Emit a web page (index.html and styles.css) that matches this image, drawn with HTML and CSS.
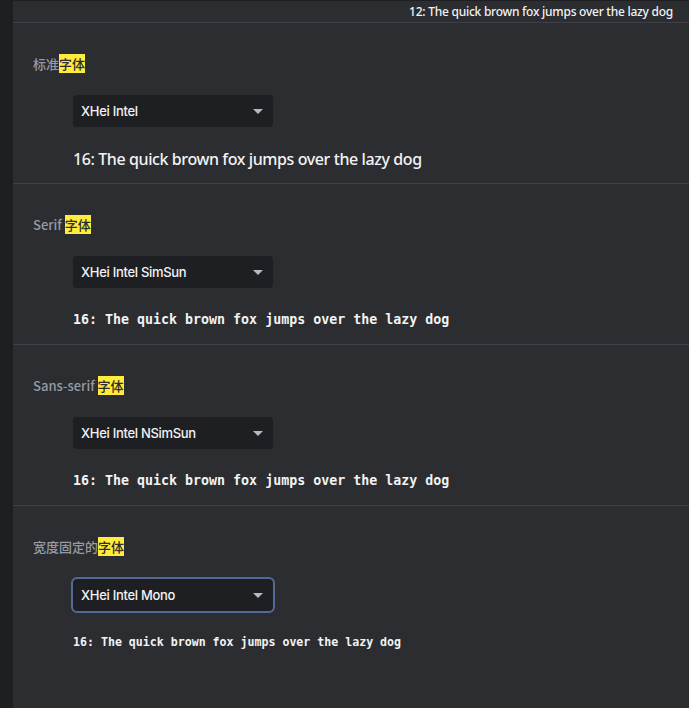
FILE: index.html
```html
<!DOCTYPE html>
<html lang="zh">
<head>
<meta charset="utf-8">
<link rel="stylesheet" href="styles.css">
</head>
<body>
<div class="sidebar"></div>
<div class="main">
  <div class="topbar">12: The quick brown fox jumps over the lazy dog</div>
  <section class="group">
    <div class="label">标准<mark>字体</mark></div>
    <div class="select"><span>XHei Intel</span><i class="arrow"></i></div>
    <div class="sample sample-sans">16: The quick brown fox jumps over the lazy dog</div>
  </section>
  <section class="group">
    <div class="label">Serif <mark>字体</mark></div>
    <div class="select"><span>XHei Intel SimSun</span><i class="arrow"></i></div>
    <div class="sample sample-mono">16: The quick brown fox jumps over the lazy dog</div>
  </section>
  <section class="group">
    <div class="label">Sans-serif <mark>字体</mark></div>
    <div class="select"><span>XHei Intel NSimSun</span><i class="arrow"></i></div>
    <div class="sample sample-mono">16: The quick brown fox jumps over the lazy dog</div>
  </section>
  <section class="group last">
    <div class="label">宽度固定的<mark>字体</mark></div>
    <div class="select focused"><span>XHei Intel Mono</span><i class="arrow"></i></div>
    <div class="sample sample-small">16: The quick brown fox jumps over the lazy dog</div>
  </section>
</div>
</body>
</html>
```
FILE: styles.css
```css
html, body {
  margin: 0;
  height: 100%;
  background: #2b2d31;
  overflow: hidden;
}
body {
  display: flex;
  font-family: "Noto Sans", "Noto Sans CJK SC", sans-serif;
  color: #f2f3f5;
}
.sidebar {
  width: 13px;
  flex: none;
  background: #1e1f22;
}
.main {
  flex: 1;
  border-top: 1px solid #1e1f22;
}
.topbar {
  height: 21px;
  line-height: 21px;
  border-bottom: 1px solid #3f4147;
  text-align: right;
  padding-right: 16px;
  font-size: 12px;
  font-weight: 500;
  color: #f2f3f5;
  letter-spacing: -0.25px;
}
.group {
  padding: 33px 0 14px 20px;
  border-bottom: 1px solid #3f4147;
}
.group.last {
  border-bottom: none;
}
.label {
  font-family: "Noto Sans CJK SC", sans-serif;
  font-size: 13px;
  line-height: 16px;
  font-weight: 500;
  color: #949ba4;
}
.label mark {
  background: #ffeb3b;
  color: #2b2d31;
  padding: 0;
}
.select {
  margin: 23px 0 0 40px;
  width: 200px;
  height: 32px;
  box-sizing: border-box;
  background: #1e1f22;
  border-radius: 4px;
  display: flex;
  align-items: center;
  justify-content: space-between;
  padding: 0 10px 0 8px;
  font-family: "Inter", sans-serif;
  font-size: 13px;
  font-weight: 500;
  color: #f2f3f5;
  letter-spacing: -0.3px;
}
.select.focused {
  outline: 2px solid #536a96;
  margin-top: 24px;
}
.arrow {
  width: 0;
  height: 0;
  border-left: 5px solid transparent;
  border-right: 5px solid transparent;
  border-top: 5px solid #b5bac1;
}
.sample {
  margin-left: 40px;
  color: #f2f3f5;
  white-space: nowrap;
}
.sample-sans {
  margin-top: 22px;
  font-family: "Noto Sans", sans-serif;
  font-size: 16px;
  font-weight: 500;
  line-height: 20px;
  letter-spacing: -0.4px;
}
.sample-mono {
  margin-top: 22px;
  font-family: "DejaVu Sans Mono", monospace;
  font-size: 13.3px;
  font-weight: bold;
  line-height: 20px;
}
.sample-small {
  margin-top: 23px;
  font-family: "DejaVu Sans Mono", monospace;
  font-size: 11.6px;
  font-weight: bold;
  line-height: 16px;
}
```
